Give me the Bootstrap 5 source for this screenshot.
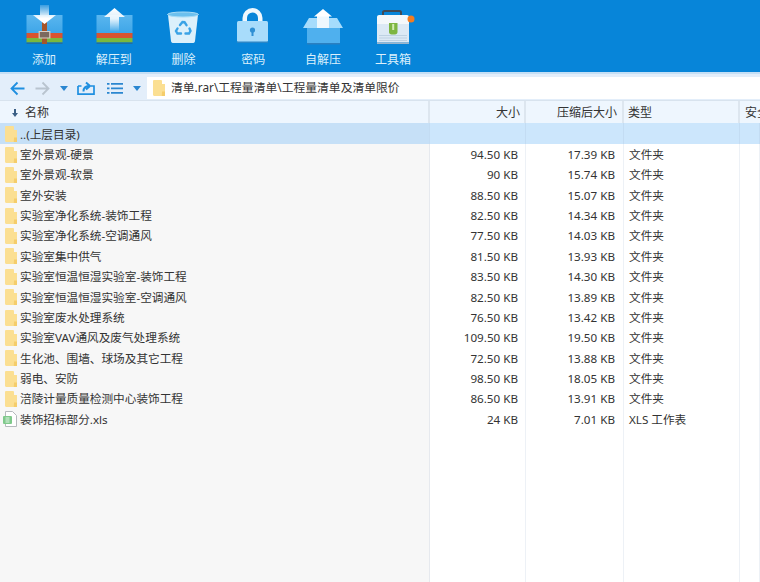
<!DOCTYPE html>
<html lang="zh-CN">
<head>
  <meta charset="UTF-8">
  <title>清单.rar</title>
  <link href="https://cdn.jsdelivr.net/npm/bootstrap@5.3.0/dist/css/bootstrap.min.css" rel="stylesheet">
  <style>
    html, body { height: 100%; overflow: hidden; }
    body { font-family: "Noto Sans", "Noto Sans CJK SC", sans-serif; font-size: 11.65px; color: #333; background: #fff; }
    .tool-strip { height: 72px; background: #0785d9; padding-left: 9px; }
    .tool-item { width: 69.8px; color: #dcf0fc; font-size: 12px; line-height: 14px; }
    .tool-item svg { display: block; width: 44px; height: 44px; margin-top: 2px; margin-bottom: 7px; }
    .addr-strip { height: 28px; background: #e3eefa; border-top: 2px solid #c5dff5; padding-left: 10px; padding-top: 3px; padding-bottom: 1px; }
    .nav-ico { display: block; flex: none; }
    .addr-box { height: 22px; background: #fff; margin-left: 6px; padding-left: 6px; font-size: 11.8px; color: #333; gap: 6px; }
    .list-head, .file-row { display: grid; grid-template-columns: 430px 96px 98px 116px 1fr; }
    .list-head { height: 23px; background: #eef6fe; font-size: 12px; line-height: 22px; border-top: 1px solid #d8e3ee; color: #333; }
    .list-head > div { border-right: 2px solid #dde6ef; padding: 1px 4px 0; white-space: nowrap; overflow: hidden; }
    .list-head > .sec-head { padding-left: 5px; padding-right: 0; border-right: 0; }
    .list-head > .packed-head { padding-right: 5px; }
    .name-head { gap: 7px; padding-left: 12px !important; }
    .file-row { height: 20.36px; line-height: 20.36px; white-space: nowrap; }
    .file-row > div { border-right: 1px solid #edf1f6; padding-top: 1px; }
    .file-row > .size-cell { padding-right: 7px; }
    .file-row > .packed-cell { padding-right: 8px; }
    .file-row > .name-cell { background: #f7f7f7; padding: 0 0 0 5px; display: flex; align-items: flex-start; gap: 3px; border-right: 1px solid #e6e9ee; }
    .name-cell > span { padding-top: 1px; }
    .file-row > .type-cell { padding-left: 5px; }
    .file-row.up-row { background: #cce6fc; height: 21px; }
    .file-row.up-row > .name-cell { background: #c6e0f7; }
    .file-row.up-row > div { border-right-color: #c3dcf3; }
    .up-row .name-cell > span { padding-top: 2px; }
    .file-list { height: 459px; }
    .file-list .fill-row { height: 170px; }
    .fold-ico { flex: none; width: 12px; height: 16px; }
    .name-cell > .fold-ico { margin-top: 2.7px; }
    .sheet-ico { flex: none; width: 14px; height: 16px; margin-left: -2px; margin-top: 2.7px; }
  </style>
</head>
<body>
  <svg width="0" height="0" class="position-absolute">
    <defs>
      <linearGradient id="arrowFade" x1="0" y1="0" x2="0" y2="1">
        <stop offset="0" stop-color="#fff"/><stop offset=".45" stop-color="#fff" stop-opacity=".85"/><stop offset="1" stop-color="#fff" stop-opacity="0"/>
      </linearGradient>
      <linearGradient id="arrowDown" x1="0" y1="0" x2="0" y2="1">
        <stop offset="0" stop-color="#fff" stop-opacity=".2"/><stop offset=".7" stop-color="#fff"/>
      </linearGradient>
      <linearGradient id="bodyBlue" x1="0" y1="0" x2="0" y2="1">
        <stop offset="0" stop-color="#5ab6ef"/><stop offset="1" stop-color="#3fa6e8"/>
      </linearGradient>
      <symbol id="folderIco" viewBox="0 0 12 16">
        <path d="M0 1.200C0 .5.5 0 1.200 0h6.600C8.500 0 9 .5 9 1.200V4h3v10.800c0 .7-.5 1.200-1.200 1.200H1.200C.5 16 0 15.500 0 14.800z" fill="#fbdf92"/>
        <path d="M9 11.500h3V16H8.800z" fill="#f5cd6b"/>
      </symbol>
      <symbol id="zipBody" viewBox="0 0 44 44">
        <path d="M4.500 13h36v18h-36z" fill="url(#bodyBlue)"/>
        <path d="M4.500 31h36v5h-36z" fill="#d9532f"/>
        <path d="M4.500 36h36v4.500h-36z" fill="#7ab83e"/>
        <path d="M4.500 40.500h36V42h-36z" fill="#1d6ea6"/>
      </symbol>
    </defs>
  </svg>

  <div class="tool-strip d-flex">
    <div class="tool-item d-flex flex-column align-items-center">
      <svg viewBox="0 0 44 44">
        <use href="#zipBody" width="44" height="44"/>
        <path d="M20 18h5v24h-5z" fill="#a5552a"/>
        <path d="M17.200 29.500h10.600v6.500H17.200z" fill="#7c6a5e" stroke="#d8cfc7" stroke-width="1.200"/>
        <path d="M18 3h9v10h7L22.500 22 11 13h7z" fill="url(#arrowDown)"/>
      </svg>
      <span>添加</span>
    </div>
    <div class="tool-item d-flex flex-column align-items-center">
      <svg viewBox="0 0 44 44">
        <use href="#zipBody" width="44" height="44"/>
        <path d="M22.500 6 33 15h-6v15h-9V15h-6z" fill="url(#arrowFade)"/>
      </svg>
      <span>解压到</span>
    </div>
    <div class="tool-item d-flex flex-column align-items-center">
      <svg viewBox="0 0 44 44">
        <path d="M7 13h30l-3 26c-.2 1.500-1 2-2.500 2h-19c-1.500 0-2.300-.5-2.500-2z" fill="#dcf0fb"/>
        <ellipse cx="22" cy="12.500" rx="15.500" ry="2.500" fill="#6cc0ee" stroke="#a9dcf6" stroke-width="1"/>
        <g fill="none" stroke="#3ba3e6" stroke-width="2.400" stroke-linecap="round" transform="translate(0 2.500)">
          <path d="M19 20.500l2.500-3 2 .2 2 3"/>
          <path d="M28.500 24l1 2.500-1.500 2.500h-3.500"/>
          <path d="M20 29h-3.500l-1.500-2.500 1.500-2.500"/>
        </g>
      </svg>
      <span>删除</span>
    </div>
    <div class="tool-item d-flex flex-column align-items-center">
      <svg viewBox="0 0 44 44">
        <path d="M11.500 20v-4a10 10 0 0 1 20 0v4h-4.500v-4a5.500 5.500 0 0 0-11 0v4z" fill="#eef7fd"/>
        <rect x="6" y="19" width="31" height="21" rx="1.500" fill="#a8dcfb"/>
        <path d="M6 39.500h31V41H6z" fill="#2a86c7"/>
        <circle cx="21.500" cy="28" r="2.600" fill="#2f8fd3"/>
        <path d="M20.500 29h2v5h-2z" fill="#2f8fd3"/>
      </svg>
      <span>密码</span>
    </div>
    <div class="tool-item d-flex flex-column align-items-center">
      <svg viewBox="0 0 44 44">
        <path d="M8 16h28l6 10H2z" fill="#a6dcfc"/>
        <path d="M16 14h12v12H16z" fill="#eef8fe"/>
        <path d="M22 7 31 14.500H13z" fill="#fff"/>
        <path d="M6 26h33v15H6z" fill="#4fb0ee"/>
        <path d="M6 41h33v1.500H6z" fill="#2a7fbf"/>
      </svg>
      <span>自解压</span>
    </div>
    <div class="tool-item d-flex flex-column align-items-center">
      <svg viewBox="0 0 44 44">
        <path d="M12 14v-3.500C12 9.500 12.500 9 13.500 9h15c1 0 1.500.5 1.500 1.500V14" fill="none" stroke="#3f4a57" stroke-width="2"/>
        <path d="M5 15c0-1.200 1-2 2-2h28c1 0 2 .8 2 2v7H5z" fill="#f4f8fb" transform="translate(1)"/>
        <path d="M6 22h32v18.500H6z" fill="#dce9f5"/>
        <path d="M8 33h28v1H8zm0 2.500h28v1H8zm0 2.500h28v1H8z" fill="#bed2e3"/>
        <path d="M6 40.500h32V42H6z" fill="#9cb5cb"/>
        <path d="M18 21h8.500v9c0 1.500-1 2.500-2.500 2.500h-3.500c-1.500 0-2.500-1-2.500-2.500z" fill="#7db642"/>
        <path d="M21.200 22h2v6h-2z" fill="#d3ecb4"/>
        <circle cx="40" cy="17" r="3.500" fill="#f47c20"/>
      </svg>
      <span>工具箱</span>
    </div>
  </div>

  <div class="addr-strip d-flex align-items-center">
    <svg class="nav-ico" width="15" height="15" viewBox="0 0 15 15" fill="none" stroke="#1f8fe0" stroke-width="1.800"><path d="M14.500 7.500H2M7.500 1.500l-6 6 6 6"/></svg>
    <svg class="nav-ico" style="margin-left:10px" width="15" height="15" viewBox="0 0 15 15" fill="none" stroke="#b9c4cf" stroke-width="1.800"><path d="M.5 7.500H13M7.500 1.500l6 6-6 6"/></svg>
    <svg class="nav-ico" style="margin-left:10px" width="8" height="5" viewBox="0 0 8 5"><path d="M0 0h8L4 5z" fill="#2a86d0"/></svg>
    <svg class="nav-ico" style="margin-left:9px" width="18" height="14" viewBox="0 0 18 14" fill="none" stroke="#1f8fe0" stroke-width="1.700"><path d="M1 5v8.200h16V5h-3M4.500 5H1"/><path d="M6.500 10.500c0-3.500 2-5.500 5.500-5.500M9 1.500 13 5 9 8.500" stroke-width="2"/></svg>
    <svg class="nav-ico" style="margin-left:12px" width="16" height="11" viewBox="0 0 16 11" fill="#2a86d0"><path d="M0 0h2.500v1.800H0zM4 0h12v1.800H4zM0 4.500h2.500v1.800H0zM4 4.500h12v1.800H4zM0 9h2.500v1.800H0zM4 9h12v1.800H4z"/></svg>
    <svg class="nav-ico" style="margin-left:10px" width="8" height="5" viewBox="0 0 8 5"><path d="M0 0h8L4 5z" fill="#2a86d0"/></svg>
    <div class="addr-box flex-grow-1 d-flex align-items-center">
      <svg class="fold-ico"><use href="#folderIco"/></svg>
      <span>清单.rar\工程量清单\工程量清单及清单限价</span>
    </div>
  </div>

  <div class="list-head">
    <div class="name-head d-flex align-items-center">
      <svg width="6" height="8" viewBox="0 0 6 8"><path d="M2 0h2v4h2L3 8 0 4h2z" fill="#3b5f85"/></svg>
      <span>名称</span>
    </div>
    <div class="text-end">大小</div>
    <div class="packed-head text-end">压缩后大小</div>
    <div>类型</div>
    <div class="sec-head">安全</div>
  </div>

  <div class="file-list" id="fileList"></div>

  <script>
    const files = [
      ['室外景观-硬景', '94.50 KB', '17.39 KB'],
      ['室外景观-软景', '90 KB', '15.74 KB'],
      ['室外安装', '88.50 KB', '15.07 KB'],
      ['实验室净化系统-装饰工程', '82.50 KB', '14.34 KB'],
      ['实验室净化系统-空调通风', '77.50 KB', '14.03 KB'],
      ['实验室集中供气', '81.50 KB', '13.93 KB'],
      ['实验室恒温恒湿实验室-装饰工程', '83.50 KB', '14.30 KB'],
      ['实验室恒温恒湿实验室-空调通风', '82.50 KB', '13.89 KB'],
      ['实验室废水处理系统', '76.50 KB', '13.42 KB'],
      ['实验室VAV通风及废气处理系统', '109.50 KB', '19.50 KB'],
      ['生化池、围墙、球场及其它工程', '72.50 KB', '13.88 KB'],
      ['弱电、安防', '98.50 KB', '18.05 KB'],
      ['涪陵计量质量检测中心装饰工程', '86.50 KB', '13.91 KB']
    ];
    const folderSvg = '<svg class="fold-ico"><use href="#folderIco"/></svg>';
    const sheetSvg = '<svg class="sheet-ico" viewBox="0 0 14 16"><path d="M2.500.5h7l4 4v11h-11z" fill="#fff" stroke="#b5b9bd"/><rect x="0" y="5" width="9" height="8" rx="1" fill="#7fc98b"/><path d="M2.500 7h4M2.500 9h4M2.500 11h4" stroke="#e5f5e8"/></svg>';

    let html = '<div class="file-row up-row"><div class="name-cell">' + folderSvg + '<span>..(上层目录)</span></div><div></div><div></div><div></div><div></div></div>';
    files.forEach(f => {
      html += `<div class="file-row"><div class="name-cell">${folderSvg}<span>${f[0]}</span></div><div class="size-cell text-end">${f[1]}</div><div class="packed-cell text-end">${f[2]}</div><div class="type-cell">文件夹</div><div></div></div>`;
    });
    html += `<div class="file-row"><div class="name-cell">${sheetSvg}<span>装饰招标部分.xls</span></div><div class="size-cell text-end">24 KB</div><div class="packed-cell text-end">7.01 KB</div><div class="type-cell">XLS 工作表</div><div></div></div>`;
    html += '<div class="file-row fill-row"><div class="name-cell"></div><div></div><div></div><div></div><div></div></div>';
    document.getElementById('fileList').innerHTML = html;
  </script>
  <script src="https://cdn.jsdelivr.net/npm/bootstrap@5.3.0/dist/js/bootstrap.bundle.min.js"></script>
</body>
</html>
